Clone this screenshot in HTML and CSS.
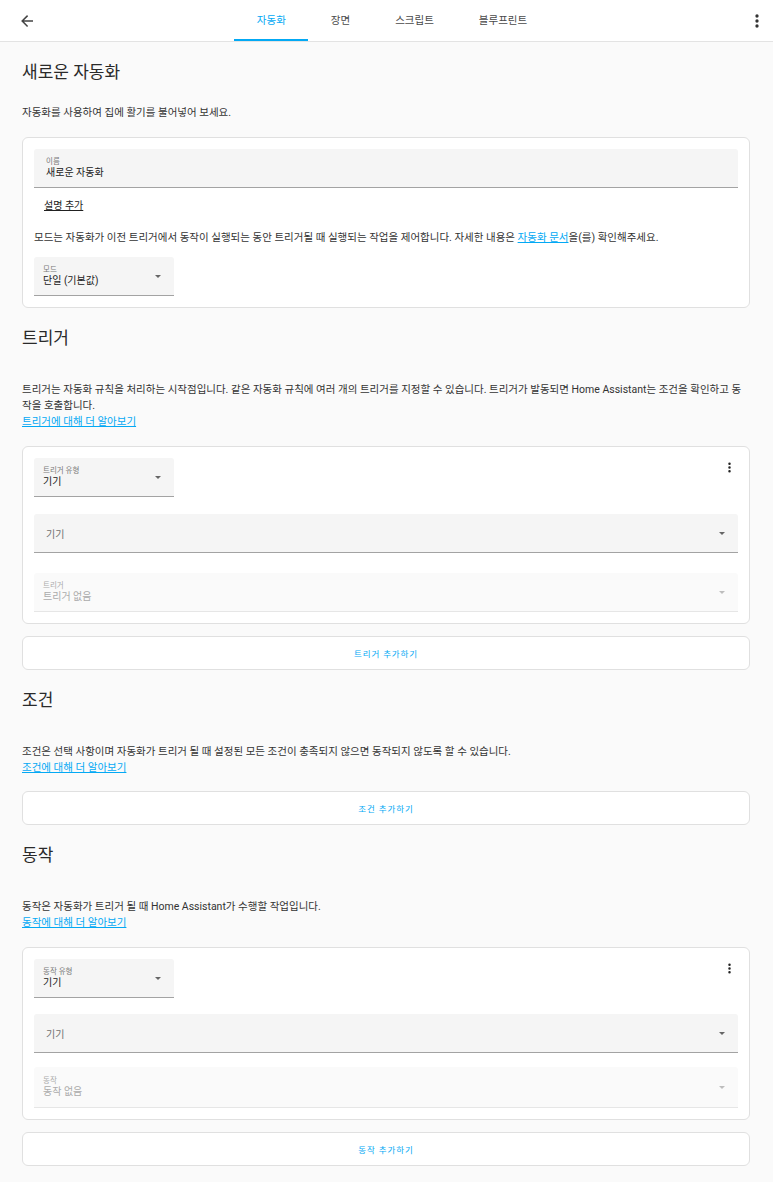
FILE: index.html
```html
<!DOCTYPE html>
<html lang="ko">
<head>
    <meta charset="UTF-8">
    <meta name="viewport" content="width=device-width, initial-scale=1.0">
    <title>새로운 자동화</title>
    <link rel="stylesheet" href="styles.css">
</head>
<body>
    <header class="topbar">
        <button class="icon-btn back-btn" aria-label="뒤로">
            <svg viewBox="0 0 24 24" width="18" height="18"><path d="M20,11V13H8L13.5,18.5L12.08,19.92L4.16,12L12.08,4.08L13.5,5.5L8,11H20Z"/></svg>
        </button>
        <nav class="tabs">
            <a class="tab active">자동화</a>
            <a class="tab">장면</a>
            <a class="tab">스크립트</a>
            <a class="tab">블루프린트</a>
        </nav>
        <button class="icon-btn menu-btn" aria-label="메뉴">
            <svg viewBox="0 0 24 24" width="20" height="20"><path d="M12,16A2,2 0 0,1 14,18A2,2 0 0,1 12,20A2,2 0 0,1 10,18A2,2 0 0,1 12,16M12,10A2,2 0 0,1 14,12A2,2 0 0,1 12,14A2,2 0 0,1 10,12A2,2 0 0,1 12,10M12,4A2,2 0 0,1 14,6A2,2 0 0,1 12,8A2,2 0 0,1 10,6A2,2 0 0,1 12,4Z"/></svg>
        </button>
    </header>

    <main class="content">
        <section class="intro">
            <h1 class="page-title">새로운 자동화</h1>
            <p class="desc">자동화를 사용하여 집에 활기를 불어넣어 보세요.</p>
            <div class="card">
                <div class="field">
                    <div class="field-text">
                        <span class="field-label">이름</span>
                        <span class="field-value">새로운 자동화</span>
                    </div>
                </div>
                <button class="text-btn">설명 추가</button>
                <p class="mode-note">모드는 자동화가 이전 트리거에서 동작이 실행되는 동안 트리거될 때 실행되는 작업을 제어합니다. 자세한 내용은 <a class="link" href="#">자동화 문서</a>을(를) 확인해주세요.</p>
                <div class="field field-select">
                    <div class="field-text">
                        <span class="field-label">모드</span>
                        <span class="field-value">단일 (기본값)</span>
                    </div>
                    <span class="arrow"></span>
                </div>
            </div>
        </section>

        <section class="section">
            <h2 class="section-title">트리거</h2>
            <p class="desc">트리거는 자동화 규칙을 처리하는 시작점입니다. 같은 자동화 규칙에 여러 개의 트리거를 지정할 수 있습니다. 트리거가 발동되면 Home Assistant는 조건을 확인하고 동작을 호출합니다.<br><a class="link" href="#">트리거에 대해 더 알아보기</a></p>
            <div class="card">
                <div class="card-row">
                    <div class="field field-select">
                        <div class="field-text">
                            <span class="field-label">트리거 유형</span>
                            <span class="field-value">기기</span>
                        </div>
                        <span class="arrow"></span>
                    </div>
                    <button class="icon-btn dots-btn" aria-label="더보기">
                        <svg viewBox="0 0 24 24" width="15" height="15"><path d="M12,16A2,2 0 0,1 14,18A2,2 0 0,1 12,20A2,2 0 0,1 10,18A2,2 0 0,1 12,16M12,10A2,2 0 0,1 14,12A2,2 0 0,1 12,14A2,2 0 0,1 10,12A2,2 0 0,1 12,10M12,4A2,2 0 0,1 14,6A2,2 0 0,1 12,8A2,2 0 0,1 10,6A2,2 0 0,1 12,4Z"/></svg>
                    </button>
                </div>
                <div class="field field-combo">
                    <span class="placeholder">기기</span>
                    <span class="arrow"></span>
                </div>
                <div class="field field-disabled">
                    <div class="field-text">
                        <span class="field-label">트리거</span>
                        <span class="field-value">트리거 없음</span>
                    </div>
                    <span class="arrow"></span>
                </div>
            </div>
            <button class="add-btn">트리거 추가하기</button>
        </section>

        <section class="section">
            <h2 class="section-title">조건</h2>
            <p class="desc">조건은 선택 사항이며 자동화가 트리거 될 때 설정된 모든 조건이 충족되지 않으면 동작되지 않도록 할 수 있습니다.<br><a class="link" href="#">조건에 대해 더 알아보기</a></p>
            <button class="add-btn">조건 추가하기</button>
        </section>

        <section class="section">
            <h2 class="section-title">동작</h2>
            <p class="desc">동작은 자동화가 트리거 될 때 Home Assistant가 수행할 작업입니다.<br><a class="link" href="#">동작에 대해 더 알아보기</a></p>
            <div class="card card-action">
                <div class="card-row">
                    <div class="field field-select">
                        <div class="field-text">
                            <span class="field-label">동작 유형</span>
                            <span class="field-value">기기</span>
                        </div>
                        <span class="arrow"></span>
                    </div>
                    <button class="icon-btn dots-btn" aria-label="더보기">
                        <svg viewBox="0 0 24 24" width="15" height="15"><path d="M12,16A2,2 0 0,1 14,18A2,2 0 0,1 12,20A2,2 0 0,1 10,18A2,2 0 0,1 12,16M12,10A2,2 0 0,1 14,12A2,2 0 0,1 12,14A2,2 0 0,1 10,12A2,2 0 0,1 12,10M12,4A2,2 0 0,1 14,6A2,2 0 0,1 12,8A2,2 0 0,1 10,6A2,2 0 0,1 12,4Z"/></svg>
                    </button>
                </div>
                <div class="field field-combo">
                    <span class="placeholder">기기</span>
                    <span class="arrow"></span>
                </div>
                <div class="field field-disabled">
                    <div class="field-text">
                        <span class="field-label">동작</span>
                        <span class="field-value">동작 없음</span>
                    </div>
                    <span class="arrow"></span>
                </div>
            </div>
            <button class="add-btn">동작 추가하기</button>
        </section>
    </main>
</body>
</html>
```

FILE: styles.css
```css
body{
    margin: 0px;
    background-color: #fafafa;
    color: #212121;
    font-family: Roboto, "Noto Sans CJK KR", sans-serif;
}
p{
    margin: 0px;
}
button{
    font-family: inherit;
    border: none;
    background: none;
    padding: 0px;
    cursor: pointer;
}

/* top bar */
.topbar{
    height: 42px;
    box-sizing: border-box;
    background-color: #ffffff;
    border-bottom: 1px solid #e3e3e3;
    display: grid;
    grid-template-columns: 54px 1fr 32px;
    align-items: center;
}
.icon-btn{
    display: flex;
    align-items: center;
    justify-content: center;
    color: #444444;
}
.icon-btn svg{
    fill: currentColor;
}
.back-btn, .menu-btn{
    height: 41px;
}
.menu-btn{
    color: #333333;
}
.tabs{
    display: flex;
    justify-content: center;
    padding-right: 11px;
    height: 41px;
}
.tab{
    padding: 0 22.5px;
    font-size: 10.5px;
    line-height: 41px;
    color: #4a4a4a;
    box-sizing: border-box;
    height: 41px;
}
.tab.active{
    color: #03a9f4;
    border-bottom: 2px solid #03a9f4;
}

/* content */
.content{
    padding: 0 23px 14px 22px;
}
.page-title, .section-title{
    margin: 14px 0 0 0;
    font-size: 17px;
    line-height: 32px;
    font-weight: 400;
    color: #2a2a2a;
}
.intro .desc{
    margin-top: 17px;
}
.desc{
    margin-top: 28px;
    font-size: 10.5px;
    line-height: 16px;
    color: #333333;
}
.link{
    color: #03a9f4;
    text-decoration: underline;
}
.card{
    margin-top: 16px;
    background-color: #ffffff;
    border: 1px solid #e0e0e0;
    border-radius: 6px;
    padding: 11px;
}
.card-row{
    display: flex;
    justify-content: space-between;
    align-items: flex-start;
}
.dots-btn{
    width: 18px;
    height: 18px;
    color: #212121;
}

/* fields */
.field{
    height: 39px;
    box-sizing: border-box;
    background-color: #f5f5f5;
    border-bottom: 1px solid #a3a3a3;
    border-radius: 3px 3px 0 0;
    display: flex;
    align-items: center;
    padding: 1px 13px 0 12px;
}
.field-text{
    flex: 1;
    display: flex;
    flex-direction: column;
}
.field-label{
    font-size: 7.5px;
    line-height: 9px;
    color: #7a7a7a;
}
.field-value{
    font-size: 10px;
    line-height: 14px;
    color: #212121;
}
.field-select{
    width: 140px;
    padding-left: 9px;
}
.arrow{
    width: 0px;
    height: 0px;
    border-left: 3px solid transparent;
    border-right: 3px solid transparent;
    border-top: 3px solid #666666;
}
.field-combo{
    margin-top: 17px;
    justify-content: space-between;
}
.placeholder{
    font-size: 10px;
    color: #6f6f6f;
}
.field-disabled{
    margin-top: 20px;
    padding-left: 9px;
    background-color: #fafafa;
    border-bottom-color: #e6e6e6;
}
.field-disabled .field-label, .field-disabled .field-value{
    color: #ababab;
}
.field-disabled .arrow{
    border-top-color: #bdbdbd;
}
.card-action .field-combo{
    margin-top: 16px;
}
.card-action .field-disabled{
    margin-top: 14px;
    height: 41px;
}

/* first card */
.text-btn{
    display: block;
    margin-top: 2px;
    height: 28px;
    padding: 0 10px;
    font-size: 10px;
    color: #212121;
    text-decoration: underline;
}
.mode-note{
    margin-top: 12px;
    font-size: 10.5px;
    line-height: 16px;
    color: #333333;
}
.card .mode-note + .field{
    margin-top: 11px;
}

.add-btn{
    display: block;
    width: 100%;
    margin-top: 12px;
    height: 34px;
    background-color: #ffffff;
    border: 1px solid #e0e0e0;
    border-radius: 6px;
    font-size: 8.5px;
    letter-spacing: 0.9px;
    color: #03a9f4;
}
.section > .desc + .add-btn{
    margin-top: 15px;
}
```
